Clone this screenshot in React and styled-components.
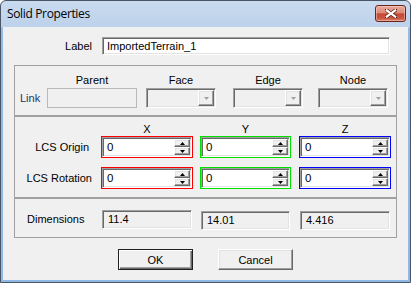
import React from "react";
import styled, { createGlobalStyle, css } from "styled-components";

const GlobalStyle = createGlobalStyle`
  html, body { margin: 0; padding: 0; background: #ffffff; }
  body {
    font-family: "Liberation Sans", Arial, sans-serif;
    font-size: 11px;
    color: #000000;
  }
  * { box-sizing: border-box; }
`;

const sunken = css`
  border: 1px solid;
  border-color: #a0a0a0 #ffffff #ffffff #a0a0a0;
  box-shadow: inset 1px 1px 0 #696969, inset -1px -1px 0 #e3e3e3;
`;

const raised = css`
  border: 1px solid;
  border-color: #ffffff #696969 #696969 #ffffff;
  box-shadow: inset -1px -1px 0 #a0a0a0, inset 1px 1px 0 #e3e3e3;
`;

const Window = styled.div`
  width: 411px;
  height: 283px;
  border: 1px solid #4a5666;
  border-radius: 6px 6px 0 0;
  background: linear-gradient(#c9dbef 0px, #bcd2ea 26px, #93bbe5 27px, #8fb8e4 100%);
  display: flex;
  flex-direction: column;
  overflow: hidden;
`;

const TitleBar = styled.div`
  height: 26px;
  flex: none;
  display: flex;
  align-items: flex-start;
  justify-content: space-between;
  padding-left: 6px;
`;

const Title = styled.span`
  font-family: "Open Sans", "Noto Sans", sans-serif;
  font-size: 12px;
  letter-spacing: -0.35px;
  line-height: 26px;
  color: #000000;
`;

const CloseButton = styled.div`
  width: 31px;
  height: 17px;
  margin: 4px 4px 0 0;
  border: 1px solid #6b2418;
  border-radius: 3px;
  background: linear-gradient(#e9aa9c 0%, #dd8a79 45%, #c84a36 52%, #c9543f 80%, #d9806c 100%);
  box-shadow: inset 0 0 0 1px rgba(255, 220, 210, 0.45);
  display: flex;
  align-items: center;
  justify-content: center;
`;

const Client = styled.div`
  flex: 1;
  margin: 0 2px 2px 2px;
  background: #f0f0f0;
  padding: 10px 11px 0 11px;
  display: flex;
  flex-direction: column;
`;

const LabelRow = styled.div`
  display: flex;
  align-items: center;
  height: 18px;
`;

const FieldLabel = styled.div`
  width: ${(p) => p.$w}px;
  flex: none;
  text-align: right;
  padding-right: ${(p) => p.$pr || 0}px;
  color: ${(p) => p.$color || "#000000"};
  white-space: nowrap;
`;

const TextInput = styled.div`
  ${sunken};
  width: 288px;
  height: 18px;
  margin-left: 10px;
  background: #ffffff;
  padding-left: 4px;
  display: flex;
  align-items: center;
`;

const Group = styled.div`
  border: 1px solid #a0a0a0;
  height: ${(p) => p.$h}px;
  padding: ${(p) => p.$pt}px 0 0 ${(p) => p.$pl}px;
  margin-top: ${(p) => p.$mt || 0}px;
  display: flex;
  flex-direction: column;
`;

const Row = styled.div`
  display: flex;
  align-items: center;
  height: ${(p) => p.$h}px;
  margin-top: ${(p) => p.$mt || 0}px;
`;

const Cell = styled.div`
  width: ${(p) => p.$w}px;
  margin-left: ${(p) => p.$ml || 0}px;
  flex: none;
  text-align: ${(p) => p.$align || "center"};
  color: ${(p) => p.$color || "#000000"};
  white-space: nowrap;
`;

const DisabledEdit = styled.div`
  width: 90px;
  height: 20px;
  border: 1px solid #b9b9b9;
  background: #f0f0f0;
  flex: none;
`;

const Combo = styled.div`
  ${sunken};
  width: 70px;
  height: 20px;
  margin-left: ${(p) => p.$ml}px;
  background: #f0f0f0;
  flex: none;
  display: flex;
  justify-content: flex-end;
  align-items: center;
  padding-right: 1px;
`;

const DropButton = styled.div`
  ${raised};
  width: 16px;
  height: 16px;
  background: #f0f0f0;
  display: flex;
  align-items: center;
  justify-content: center;
`;

const SpinFrame = styled.div`
  width: ${(p) => p.$w}px;
  height: 22px;
  margin-left: ${(p) => p.$ml || 0}px;
  border: 1px solid ${(p) => p.$color};
  flex: none;
  display: flex;
`;

const SpinEdit = styled.div`
  ${sunken};
  flex: 1;
  background: #ffffff;
  display: flex;
  align-items: center;
  padding-left: 4px;
  padding-right: 1px;
`;

const SpinValue = styled.span`
  flex: 1;
  font-size: 11.5px;
`;

const SpinButtons = styled.div`
  width: 16px;
  height: 16px;
  display: flex;
  flex-direction: column;
`;

const SpinBtn = styled.div`
  ${raised};
  height: 8px;
  background: #f0f0f0;
  display: flex;
  align-items: center;
  justify-content: center;
`;

const ReadOnlyField = styled.div`
  ${sunken};
  width: ${(p) => p.$w}px;
  height: 19px;
  margin-left: ${(p) => p.$ml || 0}px;
  margin-top: ${(p) => p.$mt || 0}px;
  background: #f0f0f0;
  flex: none;
  display: flex;
  align-items: center;
  padding-left: 5px;
`;

const ButtonRow = styled.div`
  display: flex;
  justify-content: center;
  gap: 25px;
  margin-top: 11px;
`;

const DialogButton = styled.div`
  width: 75px;
  height: 21px;
  background: #f0f0f0;
  display: flex;
  align-items: center;
  justify-content: center;
  ${(p) =>
    p.$default
      ? css`
          border: 1px solid #202020;
          box-shadow: inset 1px 1px 0 #ffffff, inset -1px -1px 0 #696969, inset -2px -2px 0 #a0a0a0;
        `
      : raised};
`;

const Arrow = ({ up, color = "#000" }) => (
  <svg width="5" height="3" viewBox="0 0 5 3">
    <polygon points={up ? "2.5,0 5,3 0,3" : "0,0 5,0 2.5,3"} fill={color} />
  </svg>
);

const Spinner = ({ color, w, ml }) => (
  <SpinFrame $color={color} $w={w} $ml={ml}>
    <SpinEdit>
      <SpinValue>0</SpinValue>
      <SpinButtons>
        <SpinBtn>
          <Arrow up />
        </SpinBtn>
        <SpinBtn>
          <Arrow />
        </SpinBtn>
      </SpinButtons>
    </SpinEdit>
  </SpinFrame>
);

const CloseGlyph = () => (
  <svg width="12" height="9" viewBox="0 0 12 9">
    <path d="M1.5 1.2 L10.5 7.8 M10.5 1.2 L1.5 7.8" stroke="#5a1a10" strokeWidth="3.6" strokeLinecap="square" />
    <path d="M1.8 1.4 L10.2 7.6 M10.2 1.4 L1.8 7.6" stroke="#ffffff" strokeWidth="2.2" strokeLinecap="square" />
  </svg>
);

export default function App() {
  return (
    <>
      <GlobalStyle />
      <Window>
        <TitleBar>
          <Title>Solid Properties</Title>
          <CloseButton>
            <CloseGlyph />
          </CloseButton>
        </TitleBar>
        <Client>
          <LabelRow>
            <FieldLabel $w={78}>Label</FieldLabel>
            <TextInput>ImportedTerrain_1</TextInput>
          </LabelRow>

          <Group $h={51} $pt={7} $pl={5} $mt={10}>
            <Row $h={13}>
              <Cell $w={27} />
              <Cell $w={90}>Parent</Cell>
              <Cell $w={70} $ml={9}>Face</Cell>
              <Cell $w={70} $ml={17}>Edge</Cell>
              <Cell $w={70} $ml={15}>Node</Cell>
            </Row>
            <Row $h={20} $mt={2}>
              <Cell $w={27} $align="left" $color="#1f3468">Link</Cell>
              <DisabledEdit />
              <Combo $ml={9}>
                <DropButton><Arrow color="#a0a0a0" /></DropButton>
              </Combo>
              <Combo $ml={17}>
                <DropButton><Arrow color="#a0a0a0" /></DropButton>
              </Combo>
              <Combo $ml={15}>
                <DropButton><Arrow color="#a0a0a0" /></DropButton>
              </Combo>
            </Row>
          </Group>

          <Group $h={82} $pt={5} $pl={0}>
            <Row $h={13}>
              <Cell $w={86} />
              <Cell $w={92}>X</Cell>
              <Cell $w={91} $ml={7}>Y</Cell>
              <Cell $w={92} $ml={8}>Z</Cell>
            </Row>
            <Row $h={22} $mt={1}>
              <FieldLabel $w={86} $pr={12}>LCS Origin</FieldLabel>
              <Spinner color="#ff0000" w={92} />
              <Spinner color="#00e000" w={91} ml={7} />
              <Spinner color="#0000ff" w={92} ml={8} />
            </Row>
            <Row $h={22} $mt={9}>
              <FieldLabel $w={86} $pr={9}>LCS Rotation</FieldLabel>
              <Spinner color="#ff0000" w={92} />
              <Spinner color="#00e000" w={91} ml={7} />
              <Spinner color="#0000ff" w={92} ml={8} />
            </Row>
          </Group>

          <Group $h={40} $pt={10} $pl={12}>
            <Row $h={20}>
              <Cell $w={75} $align="left">Dimensions</Cell>
              <ReadOnlyField $w={90}>11.4</ReadOnlyField>
              <ReadOnlyField $w={89} $ml={9} $mt={2}>14.01</ReadOnlyField>
              <ReadOnlyField $w={90} $ml={10} $mt={2}>4.416</ReadOnlyField>
            </Row>
          </Group>

          <ButtonRow>
            <DialogButton $default>OK</DialogButton>
            <DialogButton>Cancel</DialogButton>
          </ButtonRow>
        </Client>
      </Window>
    </>
  );
}
